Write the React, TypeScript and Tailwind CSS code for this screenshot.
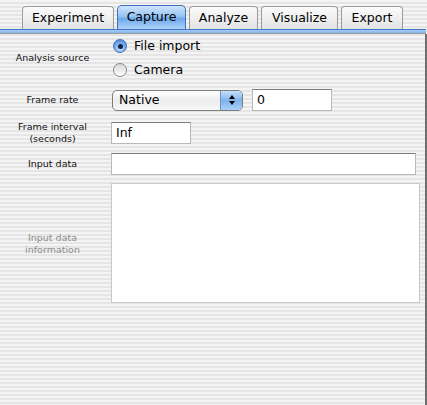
import React from "react";

const tabs = [
  { label: "Experiment", w: "w-[92px]" },
  { label: "Capture", w: "w-[69px]", active: true },
  { label: "Analyze", w: "w-[69px]" },
  { label: "Visualize", w: "w-[77px]" },
  { label: "Export", w: "w-[62px]" },
];

function Radio({ checked, label }: { checked?: boolean; label: string }) {
  return (
    <div className="flex items-center h-[16px] gap-[7px]">
      {checked ? (
        <span className="w-[14px] h-[14px] rounded-full border border-[#3d6fb8] bg-[radial-gradient(circle_at_50%_70%,#cfe6ff_0%,#6fa7ea_55%,#3b78cf_100%)] flex items-center justify-center">
          <span className="w-[5px] h-[5px] rounded-full bg-[#10243f]" />
        </span>
      ) : (
        <span className="w-[14px] h-[14px] rounded-full border border-[#8a8a8a] bg-[linear-gradient(to_bottom,#d8d8d8,#ffffff)]" />
      )}
      <span className="text-[12.5px] text-black">{label}</span>
    </div>
  );
}

function Field({ value, w }: { value?: string; w: string }) {
  return (
    <div
      className={`${w} h-[22px] bg-white border border-[#b9b9b9] border-t-[#7c7c7c] flex items-center pl-[4px] text-[12.5px] text-black`}
    >
      {value}
    </div>
  );
}

function Label({ children, muted }: { children: React.ReactNode; muted?: boolean }) {
  return (
    <div
      className={`w-[105px] shrink-0 text-center text-[9.5px] leading-[12px] ${muted ? "text-[#8c8c8c]" : "text-[#111]"}`}
    >
      {children}
    </div>
  );
}

export default function App() {
  return (
    <div
      className="w-[427px] h-[405px] overflow-hidden bg-[repeating-linear-gradient(to_bottom,#f4f4f4_0px,#f4f4f4_2px,#e5e5e5_2px,#e5e5e5_4px)]"
      style={{ fontFamily: '"DejaVu Sans", "Liberation Sans", sans-serif' }}
    >
      {/* Tabs */}
      <div className="flex items-end gap-[3px] pl-[22px] h-[29px]">
        {tabs.map((t) =>
          t.active ? (
            <div
              key={t.label}
              className={`${t.w} h-[24px] rounded-t-[5px] border border-b-0 border-[#3f70bb] bg-[linear-gradient(to_bottom,#cfe5fb_0%,#96c4f2_45%,#6ea8ea_55%,#aed3fa_100%)] flex items-center justify-center text-[12.5px] text-black`}
            >
              {t.label}
            </div>
          ) : (
            <div
              key={t.label}
              className={`${t.w} h-[23px] rounded-t-[4px] border border-b-0 border-[#9c9c9c] bg-[linear-gradient(to_bottom,#fbfbfb_0%,#efefef_50%,#e3e3e3_100%)] flex items-center justify-center text-[12.5px] text-black`}
            >
              {t.label}
            </div>
          )
        )}
      </div>

      {/* Blue separator */}
      <div className="w-[426px] h-[5px] border-t border-[#3f76c8] bg-[linear-gradient(to_bottom,#a9cdf6,#82b2ec)] border-b border-b-[#9a9a9a]" />

      {/* Content */}
      <div className="w-[427px] h-[371px] border-r-2 border-[#6e6e6e] flex flex-col">
        <div className="flex items-center mt-[3px] h-[42px]">
          <Label>Analysis source</Label>
          <div className="ml-[8px] flex flex-col gap-[8px]">
            <Radio checked label="File import" />
            <Radio label="Camera" />
          </div>
        </div>

        <div className="flex items-center mt-[10px] h-[22px]">
          <Label>Frame rate</Label>
          <div className="ml-[7px] w-[131px] h-[21px] rounded-[5px] border border-[#7d7d7d] bg-[linear-gradient(to_bottom,#ffffff,#ececec_50%,#f8f8f8)] flex overflow-hidden">
            <span className="flex-1 pl-[6px] text-[12.5px] flex items-center text-black">Native</span>
            <span className="w-[22px] border-l border-[#6f8fc0] bg-[linear-gradient(to_bottom,#c6e0fb,#7fb2ee_50%,#a9d0f8)] flex flex-col items-center justify-center gap-[2px]">
              <span className="w-0 h-0 border-l-[3px] border-r-[3px] border-b-[4px] border-l-transparent border-r-transparent border-b-black" />
              <span className="w-0 h-0 border-l-[3px] border-r-[3px] border-t-[4px] border-l-transparent border-r-transparent border-t-black" />
            </span>
          </div>
          <div className="ml-[9px]">
            <Field value="0" w="w-[80px]" />
          </div>
        </div>

        <div className="flex items-center mt-[11px] h-[22px]">
          <Label>
            Frame interval
            <br />
            (seconds)
          </Label>
          <div className="ml-[6px]">
            <Field value="Inf" w="w-[80px]" />
          </div>
        </div>

        <div className="flex items-center mt-[9px] h-[21px]">
          <Label>Input data</Label>
          <div className="ml-[6px]">
            <Field w="w-[305px]" />
          </div>
        </div>

        <div className="flex items-center mt-[9px] h-[120px]">
          <Label muted>
            <div className="mt-[2px]">
              Input data
              <br />
              information
            </div>
          </Label>
          <div className="ml-[6px] w-[309px] h-[120px] bg-white border border-[#c8c8c8]" />
        </div>
      </div>
    </div>
  );
}
